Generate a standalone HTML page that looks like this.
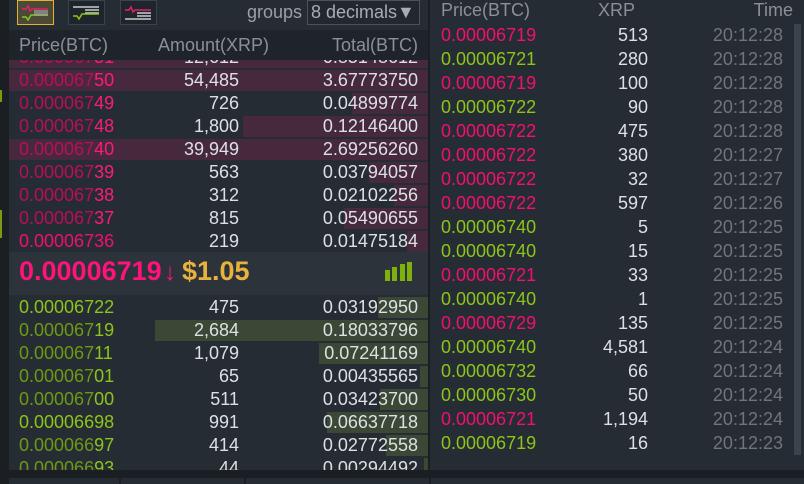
<!DOCTYPE html>
<html><head><meta charset="utf-8"><style>
*{margin:0;padding:0;box-sizing:border-box}
body{width:804px;height:484px;overflow:hidden;background:#1b1f24;font-family:"Liberation Sans",sans-serif;font-size:18px;position:relative}
.a{position:absolute}
#L{left:9px;top:0;width:419px;height:470px;background:#262c33}
#R{left:430px;top:0;width:374px;height:470px;background:#262c33}
.row{position:absolute;left:9px;width:419px;height:23px;line-height:23px}
.bar{position:absolute;top:1px;bottom:1px;right:0}
.ab{background:#46293d}.bb{background:#3b4835}
.p{position:absolute;left:10px}
.m{position:absolute;right:189px;color:#dde0e3}
.t{position:absolute;right:10px;color:#dde0e3}
.pk{color:#b80f58}.pk b{color:#ff1a78;font-weight:normal}
.pk2{color:#f0106e}
.gr{color:#6d9a13}.gr b{color:#8cc51a;font-weight:normal}
.gr2{color:#8cc51a}
.hd{color:#8b9096}
.rr{position:absolute;left:430px;width:364px;height:24px;line-height:24px}
.rr .p{left:11px}.rr .m{right:146px;color:#dde0e3}.rr .t{right:11px;color:#6f757b}
.ic{position:absolute;top:0;width:37px;height:25px;background:#1f252c;border:1px solid #3a424b}
</style></head><body>
<div class="a" style="left:0;top:90px;width:2px;height:12px;background:#7a9a10"></div>
<div class="a" style="left:0;top:210px;width:2px;height:28px;background:#7a9a10"></div>
<div id="L" class="a"></div>
<div id="R" class="a"></div>
<div class="ic" style="left:17px;background:#4a4a36;border-color:#e8b030">
<svg width="35" height="23"><path d="M4 8h4l2-3 2 5 2-2h16" stroke="#e5206a" fill="none" stroke-width="1.5"/><path d="M4 16h4l2 3 3-5h17" stroke="#8cc51a" fill="none" stroke-width="1.5"/><path d="M16 10h14M16 12h14M16 14h14" stroke="#bbb" stroke-width="1"/></svg></div>
<div class="ic" style="left:68px"><svg width="35" height="23"><path d="M4 6h26M16 9h14M16 12h14" stroke="#ccc" stroke-width="1.5"/><path d="M4 15h4l2 3 3-5h17" stroke="#8cc51a" fill="none" stroke-width="1.5"/></svg></div>
<div class="ic" style="left:120px"><svg width="35" height="23"><path d="M4 9h4l2-3 2 5 2-2h16" stroke="#e5206a" fill="none" stroke-width="1.5"/><path d="M16 12h14M16 15h14M4 18h26" stroke="#ccc" stroke-width="1.5"/></svg></div>
<div class="a" style="left:247px;top:2px;color:#9ba0a5">groups</div>
<div class="a" style="left:307px;top:0;width:113px;height:25px;border:1px solid #4a525b;background:#22282f;color:#a8adb2;line-height:23px;padding-left:3px;white-space:nowrap">8 decimals▼</div>
<div class="a" style="left:9px;top:30px;width:419px;height:30px;background:#1f242a"></div>
<div class="a hd" style="left:19px;top:35px">Price(BTC)</div>
<div class="a hd" style="left:158px;top:35px">Amount(XRP)</div>
<div class="a hd" style="right:386px;top:35px">Total(BTC)</div>
<div style="position:absolute;left:0;top:60px;width:430px;height:192px;overflow:hidden">
<div class="row" style="top:-14px"><div class="bar ab" style="left:0"></div><span class="p pk">0.000067<b>51</b></span><span class="m">12,612</span><span class="t">0.85148612</span></div>
<div class="row" style="top:9px"><div class="bar ab" style="left:0"></div><span class="p pk">0.000067<b>50</b></span><span class="m">54,485</span><span class="t">3.67773750</span></div>
<div class="row" style="top:32px"><div class="bar ab" style="left:343px"></div><span class="p pk">0.000067<b>49</b></span><span class="m">726</span><span class="t">0.04899774</span></div>
<div class="row" style="top:55px"><div class="bar ab" style="left:234px"></div><span class="p pk">0.000067<b>48</b></span><span class="m">1,800</span><span class="t">0.12146400</span></div>
<div class="row" style="top:78px"><div class="bar ab" style="left:0"></div><span class="p pk">0.000067<b>40</b></span><span class="m">39,949</span><span class="t">2.69256260</span></div>
<div class="row" style="top:101px"><div class="bar ab" style="left:360px"></div><span class="p pk">0.000067<b>39</b></span><span class="m">563</span><span class="t">0.03794057</span></div>
<div class="row" style="top:124px"><div class="bar ab" style="left:385px"></div><span class="p pk">0.000067<b>38</b></span><span class="m">312</span><span class="t">0.02102256</span></div>
<div class="row" style="top:147px"><div class="bar ab" style="left:335px"></div><span class="p pk">0.000067<b>37</b></span><span class="m">815</span><span class="t">0.05490655</span></div>
<div class="row" style="top:170px"><div class="bar ab" style="left:398px"></div><span class="p pk2">0.00006736</span><span class="m">219</span><span class="t">0.01475184</span></div>
</div>
<div class="a" style="left:9px;top:252px;width:419px;height:43px;background:#2c333b"></div>
<div class="a" style="left:19px;top:256px;font-size:27px;font-weight:bold;color:#ff127a">0.00006719</div>
<div class="a" style="left:164px;top:259px;font-size:24px;color:#ff127a">↓</div>
<div class="a" style="left:182px;top:256px;font-size:27px;font-weight:bold;color:#e9b23c">$1.05</div>
<div class="a" style="left:385px;top:270px;width:5px;height:11px;background:#7fb00e"></div>
<div class="a" style="left:392px;top:267px;width:5px;height:14px;background:#7fb00e"></div>
<div class="a" style="left:400px;top:264px;width:5px;height:17px;background:#7fb00e"></div>
<div class="a" style="left:407px;top:262px;width:5px;height:19px;background:#7fb00e"></div>
<div style="position:absolute;left:0;top:295px;width:430px;height:175px;overflow:hidden">
<div class="row" style="top:1px"><div class="bar bb" style="left:369px"></div><span class="p gr2">0.00006722</span><span class="m">475</span><span class="t">0.03192950</span></div>
<div class="row" style="top:24px"><div class="bar bb" style="left:146px"></div><span class="p gr">0.000067<b>19</b></span><span class="m">2,684</span><span class="t">0.18033796</span></div>
<div class="row" style="top:47px"><div class="bar bb" style="left:310px"></div><span class="p gr">0.000067<b>11</b></span><span class="m">1,079</span><span class="t">0.07241169</span></div>
<div class="row" style="top:70px"><div class="bar bb" style="left:411px"></div><span class="p gr">0.000067<b>01</b></span><span class="m">65</span><span class="t">0.00435565</span></div>
<div class="row" style="top:93px"><div class="bar bb" style="left:371px"></div><span class="p gr">0.000067<b>00</b></span><span class="m">511</span><span class="t">0.03423700</span></div>
<div class="row" style="top:116px"><div class="bar bb" style="left:318px"></div><span class="p gr2">0.00006698</span><span class="m">991</span><span class="t">0.06637718</span></div>
<div class="row" style="top:139px"><div class="bar bb" style="left:377px"></div><span class="p gr">0.000066<b>97</b></span><span class="m">414</span><span class="t">0.02772558</span></div>
<div class="row" style="top:162px"><div class="bar bb" style="left:415px"></div><span class="p gr">0.000066<b>93</b></span><span class="m">44</span><span class="t">0.00294492</span></div>
</div>
<div class="a hd" style="left:441px;top:0px">Price(BTC)</div>
<div class="a hd" style="left:598px;top:0px">XRP</div>
<div class="a hd" style="right:11px;top:0px">Time</div>
<div class="a" style="left:794px;top:24px;width:7px;height:431px;background:#3b434c"></div>
<div class="rr" style="top:23px"><span class="p pk2">0.00006719</span><span class="m">513</span><span class="t">20:12:28</span></div>
<div class="rr" style="top:47px"><span class="p gr2">0.00006721</span><span class="m">280</span><span class="t">20:12:28</span></div>
<div class="rr" style="top:71px"><span class="p pk2">0.00006719</span><span class="m">100</span><span class="t">20:12:28</span></div>
<div class="rr" style="top:95px"><span class="p gr2">0.00006722</span><span class="m">90</span><span class="t">20:12:28</span></div>
<div class="rr" style="top:119px"><span class="p pk2">0.00006722</span><span class="m">475</span><span class="t">20:12:28</span></div>
<div class="rr" style="top:143px"><span class="p pk2">0.00006722</span><span class="m">380</span><span class="t">20:12:27</span></div>
<div class="rr" style="top:167px"><span class="p pk2">0.00006722</span><span class="m">32</span><span class="t">20:12:27</span></div>
<div class="rr" style="top:191px"><span class="p pk2">0.00006722</span><span class="m">597</span><span class="t">20:12:26</span></div>
<div class="rr" style="top:215px"><span class="p gr2">0.00006740</span><span class="m">5</span><span class="t">20:12:25</span></div>
<div class="rr" style="top:239px"><span class="p gr2">0.00006740</span><span class="m">15</span><span class="t">20:12:25</span></div>
<div class="rr" style="top:263px"><span class="p pk2">0.00006721</span><span class="m">33</span><span class="t">20:12:25</span></div>
<div class="rr" style="top:287px"><span class="p gr2">0.00006740</span><span class="m">1</span><span class="t">20:12:25</span></div>
<div class="rr" style="top:311px"><span class="p pk2">0.00006729</span><span class="m">135</span><span class="t">20:12:25</span></div>
<div class="rr" style="top:335px"><span class="p gr2">0.00006740</span><span class="m">4,581</span><span class="t">20:12:24</span></div>
<div class="rr" style="top:359px"><span class="p gr2">0.00006732</span><span class="m">66</span><span class="t">20:12:24</span></div>
<div class="rr" style="top:383px"><span class="p gr2">0.00006730</span><span class="m">50</span><span class="t">20:12:24</span></div>
<div class="rr" style="top:407px"><span class="p pk2">0.00006721</span><span class="m">1,194</span><span class="t">20:12:24</span></div>
<div class="rr" style="top:431px"><span class="p gr2">0.00006719</span><span class="m">16</span><span class="t">20:12:23</span></div>
<div class="a" style="left:0;top:470px;width:804px;height:14px;background:#1b1f23"></div>
<div class="a" style="left:9px;top:478px;width:110px;height:6px;background:#262c33"></div>
<div class="a" style="left:121px;top:478px;width:123px;height:6px;background:#262c33"></div>
<div class="a" style="left:246px;top:478px;width:183px;height:6px;background:#262c33"></div>
<div class="a" style="left:431px;top:478px;width:373px;height:6px;background:#262c33"></div>
</body></html>
